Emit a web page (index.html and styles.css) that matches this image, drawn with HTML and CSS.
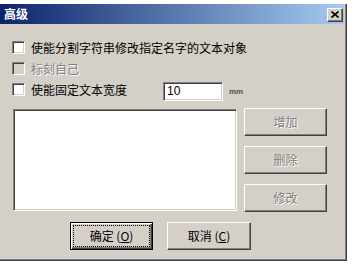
FILE: index.html
```html
<!DOCTYPE html>
<html lang="zh-CN">
<head>
<meta charset="utf-8">
<title>高级</title>
<link rel="stylesheet" href="styles.css">
</head>
<body>
<div class="window">
  <div class="titlebar">
    <span class="title">高级</span>
    <span class="close"><svg width="8" height="7" viewBox="0 0 8 7"><path d="M0.5 0.5 L7.5 6.5 M7.5 0.5 L0.5 6.5" stroke="#000" stroke-width="1.6" fill="none"/></svg></span>
  </div>
  <div class="content">
    <div class="row">
      <span class="check"></span>
      <span class="label">使能分割字符串修改指定名字的文本对象</span>
    </div>
    <div class="row">
      <span class="check disabled"></span>
      <span class="label grey">标刻自己</span>
    </div>
    <div class="row">
      <span class="check"></span>
      <span class="label fixed">使能固定文本宽度</span>
      <span class="input">10</span>
      <span class="unit">mm</span>
    </div>
    <div class="main">
      <div class="listbox"></div>
      <div class="side">
        <span class="btn side-btn grey">增加</span>
        <span class="btn side-btn grey">删除</span>
        <span class="btn side-btn grey">修改</span>
      </div>
    </div>
    <div class="footer">
      <span class="btn default"><span class="focus">确定 (<u>O</u>)</span></span>
      <span class="btn cancel">取消 (<u>C</u>)</span>
    </div>
  </div>
</div>
</body>
</html>
```
FILE: styles.css
```css
html, body {
  margin: 0;
  padding: 0;
  background: #ffffff;
}
body {
  font-family: "Noto Sans CJK SC", "Liberation Sans", sans-serif;
  font-size: 12px;
  color: #000;
}
.window {
  margin-top: 4px;
  width: 347px;
  height: 257px;
  box-sizing: border-box;
  background: #d4d0c8;
  border-right: 1px solid #404040;
  border-bottom: 1px solid #404040;
  box-shadow: inset -1px -1px #808080;
  display: flex;
  flex-direction: column;
}
.titlebar {
  height: 20px;
  margin-right: 2px;
  background: linear-gradient(to right, #0a246a, #a6caf0);
  display: flex;
  align-items: center;
  justify-content: space-between;
}
.title {
  color: #fff;
  font-weight: bold;
  font-size: 12px;
  line-height: 14px;
  padding-left: 4px;
}
.close {
  width: 16px;
  height: 14px;
  box-sizing: border-box;
  margin-right: 1px;
  margin-top: 1px;
  background: #d4d0c8;
  border: 1px solid;
  border-color: #fff #404040 #404040 #fff;
  box-shadow: inset -1px -1px #808080;
  display: flex;
  align-items: center;
  justify-content: center;
}
.close svg { display: block; }
.content {
  display: flex;
  flex-direction: column;
  padding: 17px 0 0 12px;
}
.row {
  display: flex;
  align-items: center;
  height: 13px;
}
.row + .row { margin-top: 8px; }
.check {
  width: 13px;
  height: 13px;
  box-sizing: border-box;
  background: #fff;
  border: 1px solid;
  border-color: #808080 #fff #fff #808080;
  box-shadow: inset 1px 1px #404040, inset -1px -1px #d4d0c8;
  flex: none;
}
.check.disabled { background: #d4d0c8; }
.label {
  margin-left: 6px;
  font-size: 12px;
  line-height: 13px;
  white-space: nowrap;
}
.grey {
  color: #808080;
  text-shadow: 1px 1px #fff;
}
.fixed { width: 96px; }
.input {
  align-self: flex-start;
  margin-top: -1px;
  margin-left: 36px;
  width: 60px;
  height: 19px;
  box-sizing: border-box;
  background: #fff;
  border: 1px solid;
  border-color: #808080 #fff #fff #808080;
  box-shadow: inset 1px 1px #404040, inset -1px -1px #d4d0c8;
  font-family: "Liberation Sans", sans-serif;
  font-size: 12px;
  line-height: 17px;
  padding-left: 3px;
}
.unit {
  margin-left: 6px;
  margin-top: 3px;
  font-family: "Liberation Sans", sans-serif;
  font-size: 8px;
  font-weight: bold;
  color: #505050;
}
.main {
  display: flex;
  gap: 7px;
  margin-top: 13px;
  margin-left: 1px;
}
.listbox {
  width: 224px;
  height: 102px;
  box-sizing: border-box;
  background: #fff;
  border: 1px solid;
  border-color: #808080 #fff #fff #808080;
  box-shadow: inset 1px 1px #404040, inset -1px -1px #d4d0c8;
}
.side {
  display: flex;
  flex-direction: column;
  gap: 10px;
  margin-top: -1px;
}
.btn {
  box-sizing: border-box;
  height: 28px;
  background: #d4d0c8;
  border: 1px solid;
  border-color: #fff #404040 #404040 #fff;
  box-shadow: inset -1px -1px #808080;
  display: flex;
  align-items: center;
  justify-content: center;
  font-size: 12px;
  line-height: 14px;
  white-space: nowrap;
}
.side-btn { width: 83px; }
.footer {
  display: flex;
  gap: 14px;
  margin-top: 10px;
  padding-left: 58px;
}
.default {
  width: 83px;
  border: 1px solid #000;
  box-shadow: inset 1px 1px #fff, inset -1px -1px #404040, inset -2px -2px #808080;
  padding: 2px;
  align-items: stretch;
}
.focus {
  flex: 1;
  border: 1px dotted #000;
  display: flex;
  align-items: center;
  justify-content: center;
}
.cancel { width: 84px; }
u { text-decoration: underline; }
```
